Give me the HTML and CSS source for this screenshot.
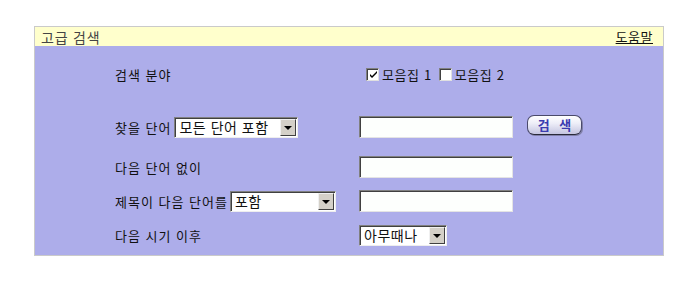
FILE: index.html
```html
<!DOCTYPE html>
<html lang="ko">
<head>
<meta charset="utf-8">
<title>고급 검색</title>
<link rel="stylesheet" href="styles.css">
</head>
<body>
<div class="box">
  <div class="head">
    <span class="title">고급 검색</span>
    <a class="help" href="#">도움말</a>
  </div>
  <div class="body">
    <div class="row r1">
      <div class="label"><span>검색 분야</span></div>
      <div class="field">
        <span class="check checked"><svg width="9" height="9" viewBox="0 0 9 9"><path d="M1 4 L3 6 L8 1 L8 3 L3 8 L1 6 Z" fill="#000"/></svg></span>
        <span class="ctext">모음집 1</span>
        <span class="check"></span>
        <span class="ctext">모음집 2</span>
      </div>
    </div>
    <div class="row r2">
      <div class="label"><span>찾을 단어</span><div class="select s1"><span class="stext">모든 단어 포함</span><span class="arrow"><i></i></span></div></div>
      <div class="field">
        <div class="input"></div>
        <button class="btn">검 색</button>
      </div>
    </div>
    <div class="row r3">
      <div class="label"><span>다음 단어 없이</span></div>
      <div class="field"><div class="input"></div></div>
    </div>
    <div class="row r4">
      <div class="label"><span>제목이 다음 단어를</span><div class="select s2"><span class="stext">포함</span><span class="arrow"><i></i></span></div></div>
      <div class="field"><div class="input"></div></div>
    </div>
    <div class="row r5">
      <div class="label"><span>다음 시기 이후</span></div>
      <div class="field">
        <div class="select s3"><span class="stext">아무때나</span><span class="arrow"><i></i></span></div>
      </div>
    </div>
  </div>
</div>
</body>
</html>
```
FILE: styles.css
```css
* { box-sizing: border-box; }
html, body { margin: 0; padding: 0; background: #fff; }
body {
  font-family: "Noto Sans CJK KR", "Noto Sans", sans-serif;
  font-size: 13px;
  color: #111;
}
.box {
  margin: 26px 0 0 34px;
  width: 630px;
  border: 1px solid #cacaca;
  background: #adadea;
}
.head {
  height: 19px;
  background: #ffffcc;
  display: flex;
  justify-content: space-between;
  align-items: center;
  padding: 0 10px 0 6px;
}
.title { font-size: 14px; color: #444; letter-spacing: 0.8px; }
.help { color: #111; text-decoration: underline; font-size: 13px; letter-spacing: 0.5px; }
.body { padding: 16px 0 9px 80px; }
.row { display: flex; align-items: center; height: 22px; }
.r1 { height: 24px; }
.r2 { margin-top: 30px; }
.r3 { margin-top: 18px; }
.r4 { margin-top: 12px; }
.r5 { margin-top: 12px; }
.label {
  width: 244px;
  display: flex;
  align-items: center;
  letter-spacing: 1px;
  white-space: nowrap;
}
.field { display: flex; align-items: center; }
.check {
  width: 13px; height: 13px;
  background: #fff;
  border: 1px solid;
  border-color: #808080 #e0e0e0 #e0e0e0 #808080;
  box-shadow: inset 1px 1px 0 #404040;
  display: inline-flex; align-items: center; justify-content: center;
  margin-left: 7px;
  margin-right: 3px;
}
.check svg { margin: 1px 0 0 1px; }
.ctext { letter-spacing: 0.6px; }
.select {
  display: flex;
  align-items: center;
  height: 21px;
  background: #fff;
  border: 1px solid;
  border-color: #808080 #eee #eee #808080;
  box-shadow: inset 1px 1px 0 #404040;
  padding: 1px 1px 1px 2px;
  font-size: 14px;
  letter-spacing: 0.5px;
}
.s1 { width: 124px; margin-left: 3px; }
.s2 { width: 106px; margin-left: 2px; }
.s3 { width: 88px; }
.stext { flex: 1; padding-left: 2px; line-height: 17px; }
.arrow {
  width: 16px; height: 17px;
  background: #d4d0c8;
  border: 1px solid;
  border-color: #f0f0f0 #404040 #404040 #f0f0f0;
  display: flex; align-items: center; justify-content: center;
}
.arrow i {
  width: 0; height: 0;
  border-left: 4px solid transparent;
  border-right: 4px solid transparent;
  border-top: 4px solid #000;
  margin-top: 1px;
}
.input {
  width: 154px; height: 22px;
  background: #fdfffd;
  border: 1px solid;
  border-color: #808080 #e4e4e4 #e4e4e4 #808080;
  box-shadow: inset 1px 1px 0 #404040;
}
.btn {
  margin-left: 14px;
  width: 55px; height: 20px;
  margin-top: -5px;
  border: 1px solid #4a4a6a;
  border-bottom-color: #2a2a3a;
  border-radius: 7px;
  background: linear-gradient(#ffffff 0%, #eeeef8 40%, #c4c4e0 100%);
  color: #3b3bb0;
  font-family: "Noto Sans CJK KR", sans-serif;
  font-weight: bold;
  font-size: 13px;
  line-height: 16px;
  padding: 0;
  letter-spacing: 3px;
  text-indent: 3px;
  box-shadow: 1px 1px 0 #8080a8;
}
```
